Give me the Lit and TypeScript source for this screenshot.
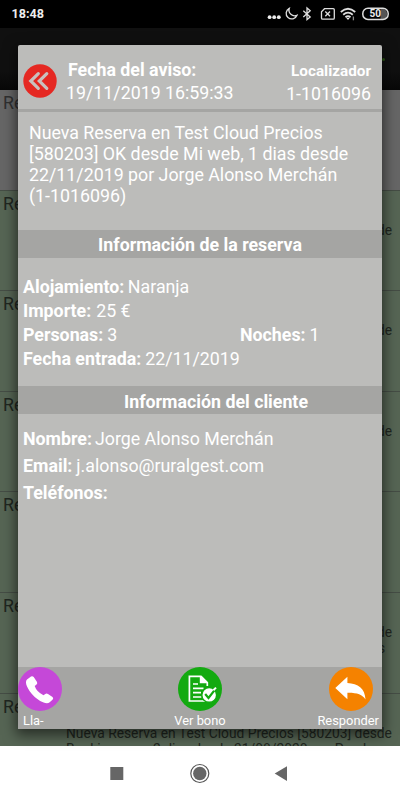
import { LitElement, html, css, svg } from "lit";
import { customElement } from "lit/decorators.js";

// One list entry behind the dialog: tone, height, visible description tails.
// Entries covered by the dialog only show the last letters at its right side.
const ROWS: { tone: string; h: number; tail?: string[]; full?: string[] }[] = [
  { tone: "plain", h: 101 },
  { tone: "green", h: 100, tail: ["de"] },
  { tone: "green", h: 101, tail: ["de"] },
  { tone: "green", h: 100, tail: ["de"] },
  { tone: "green", h: 101 },
  { tone: "green", h: 101, tail: ["de", "s"] },
  { tone: "green", h: 101, full: ["Nueva Reserva en Test Cloud Precios [580203] desde", "Booking.com, 2 dias desde 31/08/2020 por Pruebas"] },
];

@customElement("app-root")
export class AppRoot extends LitElement {
  static styles = css`
    :host { display: block; position: relative; width: 400px; height: 800px; overflow: hidden; font-family: Roboto, sans-serif; background: #fff; }
    svg { display: block; }
    .screen { display: flex; flex-direction: column; height: 800px; }
    .status { height: 28px; flex: none; background: #000; color: #eee; display: flex; align-items: center; justify-content: space-between; }
    .clock { font-size: 12.6px; font-weight: 700; padding-left: 11.5px; line-height: 28px; }
    .bar { height: 62px; flex: none; background: linear-gradient(#101010 70%, #080808); display: flex; justify-content: flex-end; }
    .dot { width: 3px; height: 3px; margin: 30px 15px 0 0; background: #2c5a14; border-radius: 50%; }
    .list { height: 656px; flex: none; overflow: hidden; }
    .row { box-sizing: border-box; border-bottom: 1px solid #454d45; padding: 1px 0 0 3px; color: #202620; }
    .green { background: #566554; }
    .plain { background: #666; color: #303030; }
    .title { font-size: 17.8px; line-height: 24px; }
    .desc { font-size: 13.8px; line-height: 16px; padding: 5.5px 8px 0 0; white-space: nowrap; }
    .tail { text-align: right; }
    .tail div + div { padding-right: 7px; }
    .full { padding-left: 63px; }
    .nav { flex: 1; background: #fff; }
    .dialog { position: absolute; left: 18px; top: 45px; width: 364px; height: 684px; box-sizing: border-box; background: #bcbcba; border-radius: 2px 2px 0 0; box-shadow: 0 4px 13px 2px rgba(0,0,0,.55); color: #fff; display: flex; flex-direction: column; overflow: hidden; font-size: 17.8px; }
    .head { height: 64px; flex: none; border-bottom: 3px solid #a5a5a3; display: flex; }
    .back { padding: 19px 0 0 5px; width: 43px; flex: none; }
    .when { flex: 1; padding-top: 13px; }
    .loc { padding: 13px 11px 0 0; text-align: right; }
    .h { font-weight: 700; line-height: 24px; padding-left: 2px; }
    .loc .h { font-size: 15.3px; line-height: 26px; padding: 0; }
    .v { line-height: 22px; }
    .loc .v { line-height: 19px; }
    .msg { height: 117.5px; flex: none; box-sizing: border-box; padding: 10px 0 0 11px; line-height: 21px; white-space: nowrap; }
    .band { height: 28px; flex: none; background: #a5a5a3; font-weight: 700; line-height: 29px; text-align: center; }
    .band.second { padding-left: 32px; line-height: 31px; }
    .info { height: 128.5px; flex: none; box-sizing: border-box; padding: 17px 0 0 5px; line-height: 24px; }
    .client { flex: 1; padding: 10.5px 0 0 5px; line-height: 27px; }
    .pair { display: grid; grid-template-columns: 217px 1fr; }
    .foot { height: 62px; flex: none; background: #a5a5a3; display: grid; grid-template-columns: 120px 124px 120px; font-size: 12.9px; line-height: 17px; }
    .act { display: flex; flex-direction: column; align-items: center; }
    .act:first-child { align-items: flex-start; }
    .act:first-child span { padding-left: 5px; }
    .act:last-child { align-items: flex-end; padding-right: 3px; }
    .act:last-child svg { margin-right: 6.5px; }
    .act svg { margin-bottom: 1px; }
  `;

  private field(label: string, value: string, gap = 3) {
    return html`<div><b>${label}</b><span style="margin-left:${gap}px">${value}</span></div>`;
  }

  private statusIcons() {
    return svg`<svg width="140" height="28" viewBox="260 0 140 28" fill="none" stroke="#ddd" stroke-width="1.3">
      <g fill="#eee" stroke="none"><circle cx="269.6" cy="17.2" r="1.9"/><circle cx="274.2" cy="17.2" r="1.9"/><circle cx="278.8" cy="17.2" r="1.9"/></g>
      <path d="M289.3 8.3A5.6 5.6 0 1 0 297 15.3A5.7 5.7 0 0 1 289.3 8.3Z"/>
      <path d="M303.3 10.8L310.2 17L307 19.6V8L310.2 10.8L303.3 17"/>
      <path d="M324.5 8.7H333.2Q334.3 8.7 334.3 9.8V18Q334.3 19.2 333.2 19.2H322.7Q321.5 19.2 321.5 18V11.8Z"/>
      <path d="M325.3 11.5L330 16.3M330 11.5L325.3 16.3"/>
      <path stroke-width="1.8" d="M340.8 12Q348 5.5 355.2 12M343.2 14.7Q348 10.5 352.8 14.7M345.5 17.3Q348 15.2 350.5 17.3"/>
      <path d="M346.4 18L348 20L349.6 18Z" fill="#eee" stroke="none"/><path d="M353.4 16.5V20.3" stroke="#888"/>
      <path d="M380.5 9H384Q387 10 387 14Q387 18 384 19H380.5Z" fill="#555" stroke="none"/>
      <rect x="362.8" y="8.2" width="25.4" height="11.2" rx="5.2" stroke-width="1.5"/>
      <text x="375.3" y="17.4" text-anchor="middle" font-family="Roboto" font-weight="700" font-size="10" fill="#eee" stroke="none">50</text>
    </svg>`;
  }

  render() {
    return html`
      <div class="screen">
        <div class="status"><span class="clock">18:48</span>${this.statusIcons()}</div>
        <div class="bar"><span class="dot"></span></div>
        <div class="list">
          ${ROWS.map((r) => html`<div class="row ${r.tone}" style="height:${r.h}px">
            <div class="title">Re</div>
            ${r.tail ? html`<div class="desc tail">${r.tail.map((t) => html`<div>${t}</div>`)}</div>` : ""}
            ${r.full ? html`<div class="desc full">${r.full.map((t) => html`<div>${t}</div>`)}</div>` : ""}
          </div>`)}
        </div>
        <div class="nav">
          <svg width="400" height="54" viewBox="0 746 400 54">
            <rect x="110.3" y="767" width="13" height="13" fill="#666"/>
            <circle cx="199.8" cy="773.5" r="9" fill="none" stroke="#555" stroke-width="1.2"/><circle cx="199.8" cy="773.5" r="6.7" fill="#666"/>
            <path d="M274.7 773.5L287 766.3V781Z" fill="#666"/>
          </svg>
        </div>
      </div>
      <div class="dialog">
        <div class="head">
          <div class="back"><svg width="34" height="34" viewBox="0 0 34 34"><circle cx="17" cy="17" r="16.7" fill="#e52822"/><path d="M15.3 9.7L7.8 17L15.3 24.3M23.8 9.7L16.3 17L23.8 24.3" fill="none" stroke="#c9c0be" stroke-width="3.2" stroke-linecap="round" stroke-linejoin="miter"/></svg></div>
          <div class="when"><div class="h">Fecha del aviso:</div><div class="v">19/11/2019 16:59:33</div></div>
          <div class="loc"><div class="h">Localizador</div><div class="v">1-1016096</div></div>
        </div>
        <div class="msg">Nueva Reserva en Test Cloud Precios<br>[580203] OK desde Mi web, 1 dias desde<br>22/11/2019 por Jorge Alonso Merchán<br>(1-1016096)</div>
        <div class="band">Información de la reserva</div>
        <div class="info">
          ${this.field("Alojamiento:", "Naranja", 3.5)}
          ${this.field("Importe:", "25 €", 5)}
          <div class="pair">${this.field("Personas:", "3", 4)}${this.field("Noches:", "1", 4)}</div>
          ${this.field("Fecha entrada:", "22/11/2019", 4)}
        </div>
        <div class="band second">Información del cliente</div>
        <div class="client">
          ${this.field("Nombre:", "Jorge Alonso Merchán", 3)}
          ${this.field("Email:", "j.alonso@ruralgest.com", 4)}
          ${this.field("Teléfonos:", "")}
        </div>
        <div class="foot">
          <div class="act"><svg width="44" height="44" viewBox="0 0 44 44"><circle cx="22" cy="22" r="22" fill="#c548d8"/><path d="M9 12.5L13 9.5Q14.5 8.6 15.7 10L19 15Q19.8 16.5 18.3 17.8L16.7 19Q18.5 24.7 25.5 28.3L27.3 27Q28.5 26 30 27L34.5 30Q35.8 31 34.7 32.5L31.7 35.3C28 38 20.5 33.7 15.5 28.7C10 23 6 15.5 9 12.5Z" fill="#fff"/></svg><span>Lla-</span></div>
          <div class="act"><svg width="44" height="44" viewBox="0 0 44 44"><circle cx="22" cy="22" r="22" fill="#13aa10"/><g fill="none" stroke="#fff" stroke-width="1.7"><path d="M29.3 19V15.5L23 9.4H11.4V34H28"/><path d="M15 17H20M15 21.4H25.5M15 25.7H23M15 30H23.5"/></g><path d="M21.8 9V16.3H29.5V15.2L23.5 9Z" fill="#fff"/><circle cx="31.2" cy="27.9" r="7.4" fill="#fff" stroke="#13aa10" stroke-width="1.4"/><path d="M27.2 27L30.5 31L37 22.6" fill="none" stroke="#13aa10" stroke-width="2.2"/><path d="M35.4 23.2L38 20.6" stroke="#fff" stroke-width="2"/></svg><span>Ver bono</span></div>
          <div class="act"><svg width="44" height="44" viewBox="0 0 44 44"><circle cx="22" cy="22" r="22" fill="#f58200"/><path d="M6.3 21L18.4 9.7V16C29 16.5 36 21.5 36.5 32.5C33.5 27.5 27.5 25.6 18.4 25.8V32.2Z" fill="#fff"/></svg><span>Responder</span></div>
        </div>
      </div>`;
  }
}
